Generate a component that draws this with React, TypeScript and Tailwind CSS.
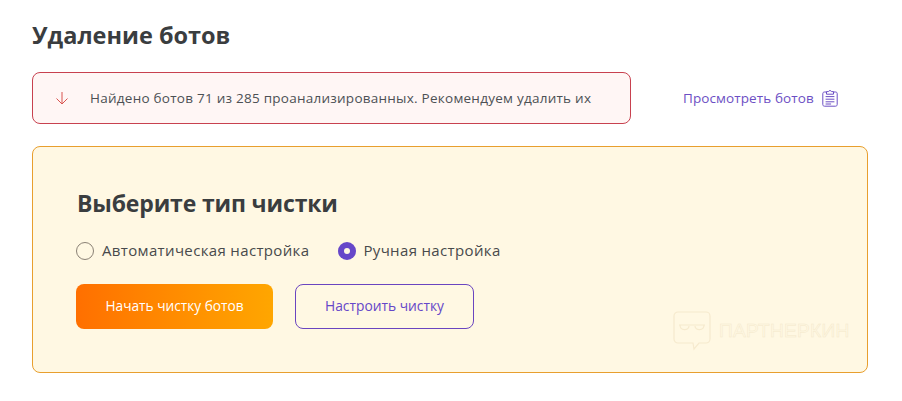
const font = "font-['Open_Sans','Noto_Sans',sans-serif]";

const ClipboardIcon = () => (
  <svg width="16" height="18" viewBox="0 0 16 18" fill="none" stroke="#6c4fc4" strokeWidth="1" className="ml-[8px]">
    <path d="M4.5 3H2.5C1.4 3 .8 3.6.8 4.7v10.8c0 1 .6 1.7 1.7 1.7h11c1.1 0 1.7-.7 1.7-1.7V4.7C15.2 3.6 14.6 3 13.5 3h-2" />
    <path d="M4.5 2.6h2a1.6 1.6 0 0 1 3 0h2v2.6h-7z" />
    <path d="M3.6 7.6h8.8M3.6 10.2h8.8M3.6 12.8h8.8M3.6 15h5.5" />
  </svg>
);

const Radio = ({ checked, label }: { checked?: boolean; label: string }) => (
  <label className="flex items-center">
    {checked ? (
      <span className="mr-[7px] flex h-[18px] w-[18px] items-center justify-center rounded-full bg-[#6647c9]">
        <span className="h-[6px] w-[6px] rounded-full bg-[#fff8e3]" />
      </span>
    ) : (
      <span className="mr-[8px] h-[18px] w-[18px] rounded-full border border-[#8a8175]" />
    )}
    <span className="-mt-[1px] text-[15px] tracking-[0.35px] text-[#484a4c]">{label}</span>
  </label>
);

const Watermark = () => (
  <div className="absolute left-[640px] top-[164px] flex items-center">
    <svg width="38" height="40" viewBox="0 0 38 40" fill="none" stroke="#f6eace" strokeWidth="1.2">
      <path d="M5 1h28a4 4 0 0 1 4 4v23a4 4 0 0 1-4 4H26l-5 6-1-6H5a4 4 0 0 1-4-4V5a4 4 0 0 1 4-4z" />
      <path d="M6 14h26M7 14c0 6 9 6 9 1M22 15c0 5 9 5 9-1" />
    </svg>
    <span className="ml-[8px] font-['Liberation_Sans',sans-serif] text-[19.2px] tracking-[0.2px] text-transparent [-webkit-text-stroke:0.5px_#f4e8cb]">
      ПАРТНЕРКИН
    </span>
  </div>
);

export default function App() {
  return (
    <div className={`${font} h-[401px] w-[902px] overflow-hidden bg-white px-[32px] pt-[19px]`}>
      <h1 className="text-[23.5px] font-bold leading-[32px] text-[#3a3d3f]">Удаление ботов</h1>

      <div className="mt-[21px] flex items-center">
        <div className="flex h-[52px] w-[599px] items-center rounded-[8px] border border-[#c8414f] bg-[#fff6f5] pl-[22px]">
          <svg width="14" height="14" viewBox="0 0 14 14" fill="none" stroke="#d9534f" strokeWidth="1">
            <path d="M7 1v12M1.5 7.5 7 13l5.5-5.5" />
          </svg>
          <span className="ml-[21px] text-[13.5px] tracking-[0.25px] text-[#4c5054]">
            Найдено ботов 71 из 285 проанализированных. Рекомендуем удалить их
          </span>
        </div>
        <a className="ml-[52px] flex items-center text-[13.5px] tracking-[0.1px] text-[#6c4fc4]">
          Просмотреть ботов
          <ClipboardIcon />
        </a>
      </div>

      <div className="relative mt-[22px] h-[227px] w-[836px] rounded-[8px] border border-[#e89f2e] bg-[#fff8e3] pl-[43px] pt-[40px]">
        <h2 className="pl-[1px] text-[23px] font-bold leading-[32px] tracking-[-0.15px] text-[#3a3d3f]">Выберите тип чистки</h2>
        <div className="mt-[21px] flex items-center gap-[29px]">
          <Radio label="Автоматическая настройка" />
          <Radio checked label="Ручная настройка" />
        </div>
        <div className="mt-[22px] flex gap-[22px]">
          <button className="h-[45px] w-[197px] rounded-[8px] bg-gradient-to-r from-[#ff6f00] to-[#ffa600] text-[13.7px] font-medium text-white">
            Начать чистку ботов
          </button>
          <button className="h-[45px] w-[179px] rounded-[8px] border border-[#6a45c0] text-[13.8px] text-[#6647c9]">
            Настроить чистку
          </button>
        </div>
        <Watermark />
      </div>
    </div>
  );
}
